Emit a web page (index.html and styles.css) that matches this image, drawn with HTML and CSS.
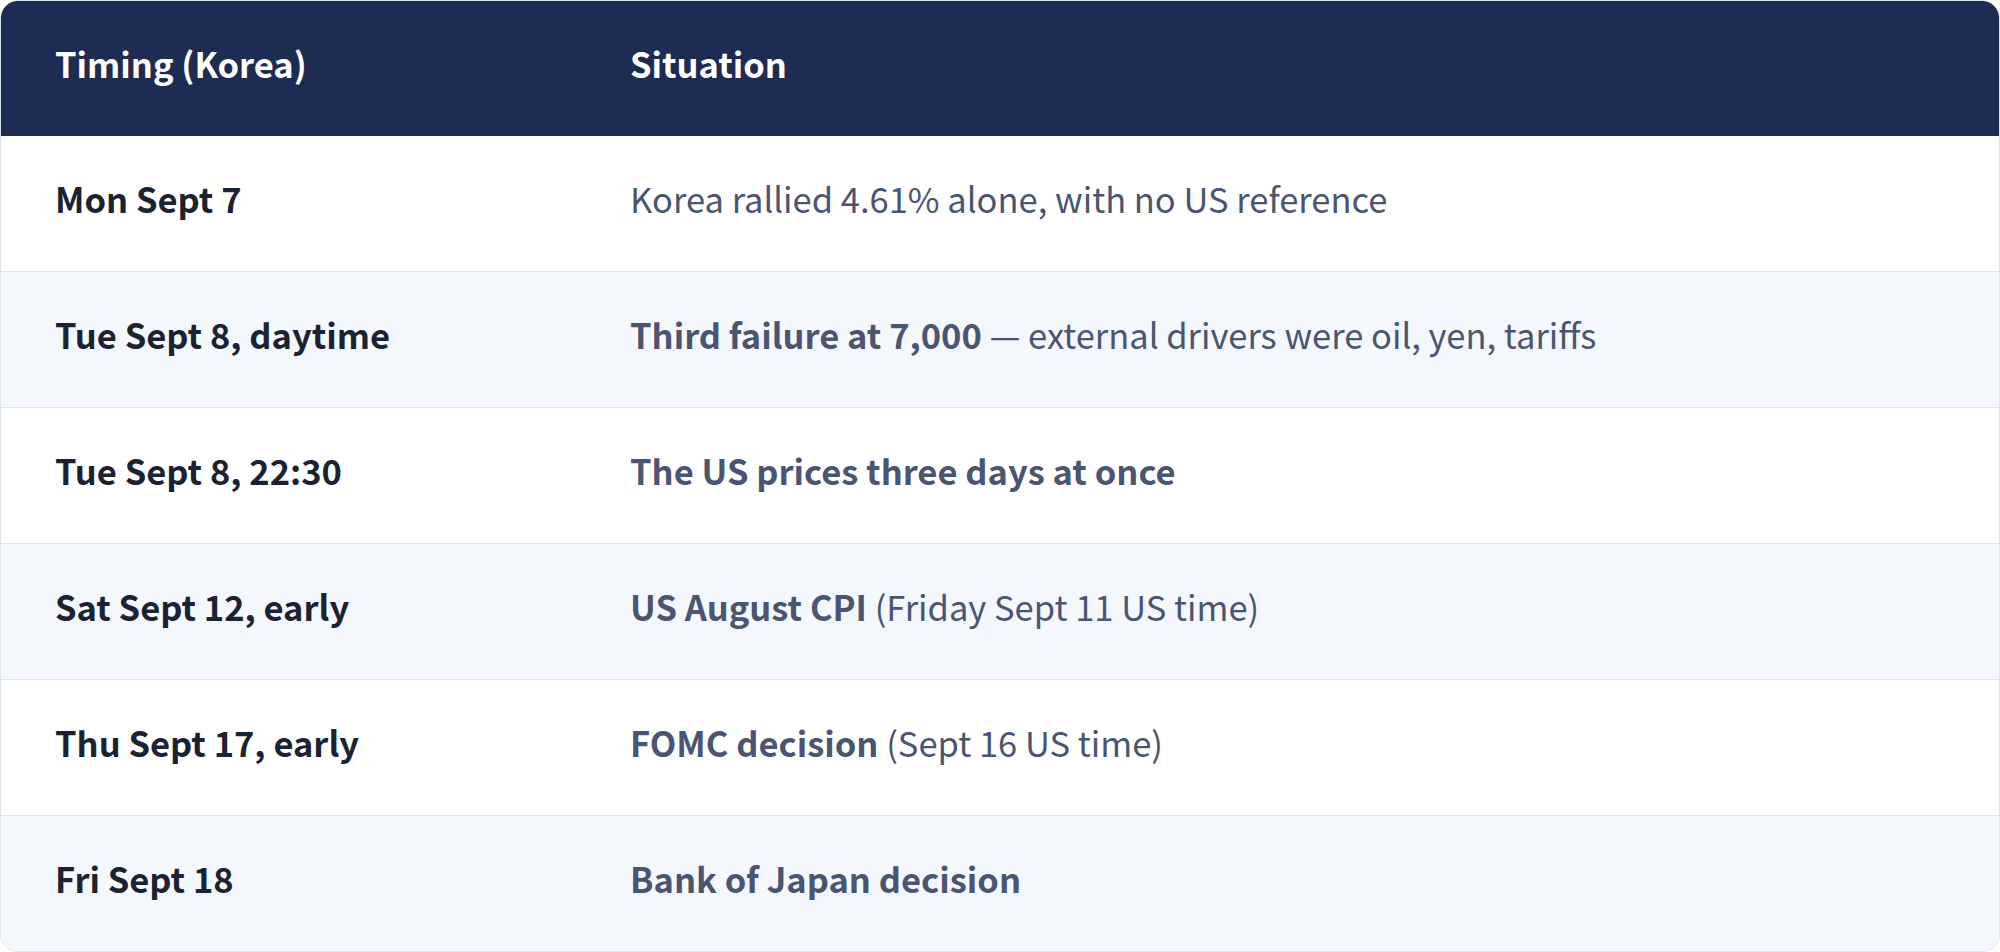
FILE: index.html
```html
<!DOCTYPE html>
<html lang="en">
<head>
<meta charset="utf-8">
<title>Timing table</title>
<link rel="stylesheet" href="styles.css">
</head>
<body>
<div class="table">
  <div class="row head">
    <div class="cell">Timing (Korea)</div>
    <div class="cell">Situation</div>
  </div>
  <div class="row">
    <div class="cell when">Mon Sept 7</div>
    <div class="cell what">Korea rallied 4.61% alone, with no US reference</div>
  </div>
  <div class="row alt">
    <div class="cell when">Tue Sept 8, daytime</div>
    <div class="cell what"><strong>Third failure at 7,000</strong> — external drivers were oil, yen, tariffs</div>
  </div>
  <div class="row">
    <div class="cell when">Tue Sept 8, 22:30</div>
    <div class="cell what"><strong>The US prices three days at once</strong></div>
  </div>
  <div class="row alt">
    <div class="cell when">Sat Sept 12, early</div>
    <div class="cell what"><strong>US August CPI</strong> (Friday Sept 11 US time)</div>
  </div>
  <div class="row">
    <div class="cell when">Thu Sept 17, early</div>
    <div class="cell what"><strong>FOMC decision</strong> (Sept 16 US time)</div>
  </div>
  <div class="row alt last">
    <div class="cell when">Fri Sept 18</div>
    <div class="cell what"><strong>Bank of Japan decision</strong></div>
  </div>
</div>
</body>
</html>
```

FILE: styles.css
```css
html, body {
  margin: 0;
  padding: 0;
  background: #ffffff;
}

body {
  font-family: "Noto Sans CJK KR", "Noto Sans", sans-serif;
  font-size: 34.5px;
}

.table {
  width: 2000px;
  box-sizing: border-box;
  border: 1px solid #dce3ef;
  border-radius: 18px;
  overflow: hidden;
  background: #ffffff;
}

.row {
  display: grid;
  grid-template-columns: 575px 1fr;
  align-items: center;
  height: 135px;
  padding: 0 54px;
  border-bottom: 1px solid #dce3ef;
  box-sizing: content-box;
}

.row.last {
  border-bottom: none;
}

.row.alt {
  background: #f4f7fc;
}

.row.head {
  background: #1e2b52;
  color: #ffffff;
  font-weight: 700;
  border-bottom: none;
}

.cell {
  white-space: nowrap;
  padding-bottom: 12px;
}

.when {
  color: #1b2232;
  font-weight: 700;
}

.what {
  color: #4a5572;
  font-weight: 400;
}

.what strong {
  font-weight: 700;
}
```
